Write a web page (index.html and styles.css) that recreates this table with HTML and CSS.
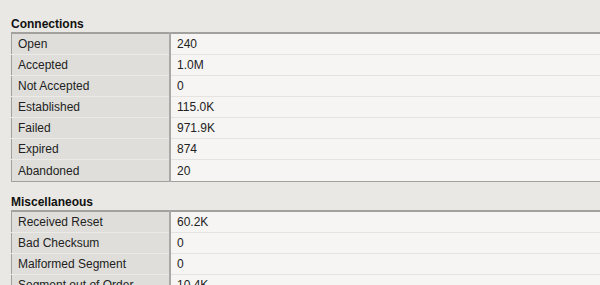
FILE: index.html
```html
<!DOCTYPE html>
<html lang="en">
<head>
  <meta charset="UTF-8" />
  <title>TCP Statistics</title>
  <link rel="stylesheet" href="styles.css">
</head>
<body>
  <div class="section">
    <h3>Connections</h3>
    <table class="stats">
      <tr><th>Open</th><td>240</td></tr>
      <tr><th>Accepted</th><td>1.0M</td></tr>
      <tr><th>Not Accepted</th><td>0</td></tr>
      <tr><th>Established</th><td>115.0K</td></tr>
      <tr><th>Failed</th><td>971.9K</td></tr>
      <tr><th>Expired</th><td>874</td></tr>
      <tr><th>Abandoned</th><td>20</td></tr>
    </table>
  </div>
  <div class="section">
    <h3>Miscellaneous</h3>
    <table class="stats">
      <tr><th>Received Reset</th><td>60.2K</td></tr>
      <tr><th>Bad Checksum</th><td>0</td></tr>
      <tr><th>Malformed Segment</th><td>0</td></tr>
      <tr><th>Segment out of Order</th><td>10.4K</td></tr>
      <tr><th>Duplicate Segment</th><td>0</td></tr>
    </table>
  </div>
</body>
</html>
```

FILE: styles.css
```css
body {
  font-family: "Liberation Sans", Arial, sans-serif;
  font-size: 12px;
  color: #222;
  background-color: #e9e8e4;
  margin: 0;
  padding: 0 0 0 11px;
}
.section {
  margin-top: 17px;
}
.section + .section {
  margin-top: 13px;
}
h3 {
  font-size: 12px;
  line-height: 14px;
  font-weight: bold;
  margin: 0 0 1px 0;
  color: #111;
}
.stats {
  width: 100%;
  border-collapse: collapse;
  border-top: 2px solid #a2a19e;
  border-left: 1px solid #a2a19e;
  border-bottom: 1px solid #a2a19e;
}
.stats th {
  width: 151px;
  text-align: left;
  font-weight: normal;
  background-color: #dfdedb;
  border-right: 2px solid #a9a8a5;
  border-bottom: 1px solid #eceae7;
  padding: 0 0 0 6px;
  height: 20px;
  color: #222;
}
.stats td {
  background-color: #f6f5f3;
  border-bottom: 1px solid #e4e3e0;
  padding: 0 0 0 6px;
  height: 20px;
  color: #222;
}
.stats tr:last-child th,
.stats tr:last-child td {
  border-bottom: none;
  height: 21px;
}
```
